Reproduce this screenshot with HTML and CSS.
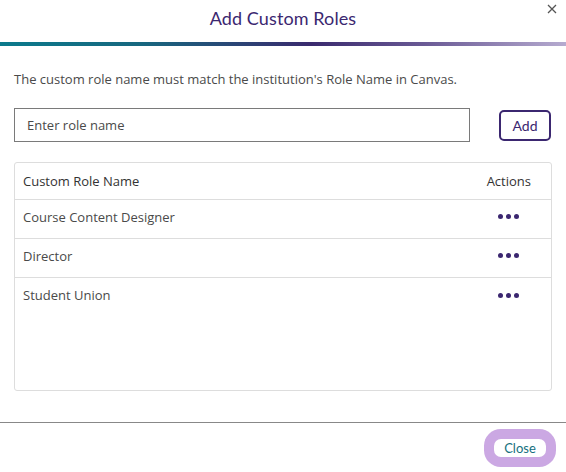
FILE: index.html
```html
<!DOCTYPE html>
<html>
<head>
<meta charset="utf-8">
<link rel="stylesheet" href="styles.css">
</head>
<body>
<div class="modal">
  <header class="head">
    <h1 class="title">Add Custom Roles</h1>
    <button class="x" aria-label="Close">
      <svg width="10" height="10" viewBox="0 0 10 10"><path d="M1 1L9 9M9 1L1 9" stroke="#555" stroke-width="1.3" fill="none"/></svg>
    </button>
  </header>
  <div class="bar"></div>
  <main class="body">
    <p class="note">The custom role name must match the institution's Role Name in Canvas.</p>
    <div class="addrow">
      <input class="inp" type="text" placeholder="Enter role name">
      <button class="add">Add</button>
    </div>
    <div class="table">
      <div class="row hrow"><span class="name">Custom Role Name</span><span class="act">Actions</span></div>
      <div class="row"><span class="name">Course Content Designer</span><span class="dots"><i></i><i></i><i></i></span></div>
      <div class="row"><span class="name">Director</span><span class="dots"><i></i><i></i><i></i></span></div>
      <div class="row last"><span class="name">Student Union</span><span class="dots"><i></i><i></i><i></i></span></div>
    </div>
  </main>
  <footer class="foot">
    <button class="close">Close</button>
  </footer>
</div>
</body>
</html>
```
FILE: styles.css
```css
html, body { margin: 0; padding: 0; background: #fff; }
body { font-family: "Open Sans", Lato, sans-serif; color: #444; width: 566px; height: 472px; overflow: hidden; }
.modal { display: flex; flex-direction: column; height: 472px; }
.head { position: relative; height: 42px; display: flex; justify-content: center; }
.title { margin: 0; padding-top: 7px; font-family: Lato, sans-serif; font-size: 18px; font-weight: 400; color: #3b2770; letter-spacing: 0.1px; }
.x { position: absolute; right: 8px; top: 3px; border: 0; background: none; padding: 0; width: 12px; height: 12px; display: flex; align-items: center; justify-content: center; }
.bar { height: 4px; background: linear-gradient(90deg, #0b7a8c 0%, #17677f 25%, #3a2a6e 55%, #6a5a95 75%, #b6abd0 100%); }
.body { padding: 0 14px; flex: 1; }
.note { margin: 25px 0 0; font-size: 13px; line-height: 16px; color: #4a4a4a; }
.addrow { display: flex; align-items: center; margin-top: 21px; gap: 29px; }
.inp { flex: 1; height: 34px; box-sizing: border-box; border: 1px solid #7a7a7a; border-radius: 0; padding: 0 12px; font-family: inherit; font-size: 13px; color: #444; outline: none; }
.inp::placeholder { color: #4a4a4a; }
.add { width: 52px; height: 31px; box-sizing: border-box; margin-right: 1px; border: 2px solid #3b2770; border-radius: 5px; background: #fff; color: #3b2770; font-family: Lato, sans-serif; font-size: 14px; padding: 0; }
.table { margin-top: 20px; height: 229px; box-sizing: border-box; border: 1px solid #ddd; border-radius: 3px; }
.row { display: flex; align-items: center; justify-content: space-between; height: 39px; border-bottom: 1px solid #ddd; padding: 0 20px 5px 8px; font-size: 13px; color: #4a4a4a; box-sizing: border-box; }
.row.hrow { height: 37px; color: #333; padding-bottom: 0; }
.row.last { border-bottom: 0; }
.dots { display: flex; gap: 3px; margin-right: 12px; }
.dots i { width: 5px; height: 5px; border-radius: 50%; background: #3b2770; display: block; }
.foot { border-top: 1px solid #888; height: 49px; display: flex; justify-content: flex-end; align-items: flex-start; padding-right: 20px; margin-top: 30px; }
.close { margin-top: 16px; height: 18px; width: 52px; padding: 0; border: 0; border-radius: 7px; background: #fff; color: #16707e; font-family: Lato, sans-serif; font-size: 13px; box-shadow: 0 0 0 10px #cba8e3; }
```
